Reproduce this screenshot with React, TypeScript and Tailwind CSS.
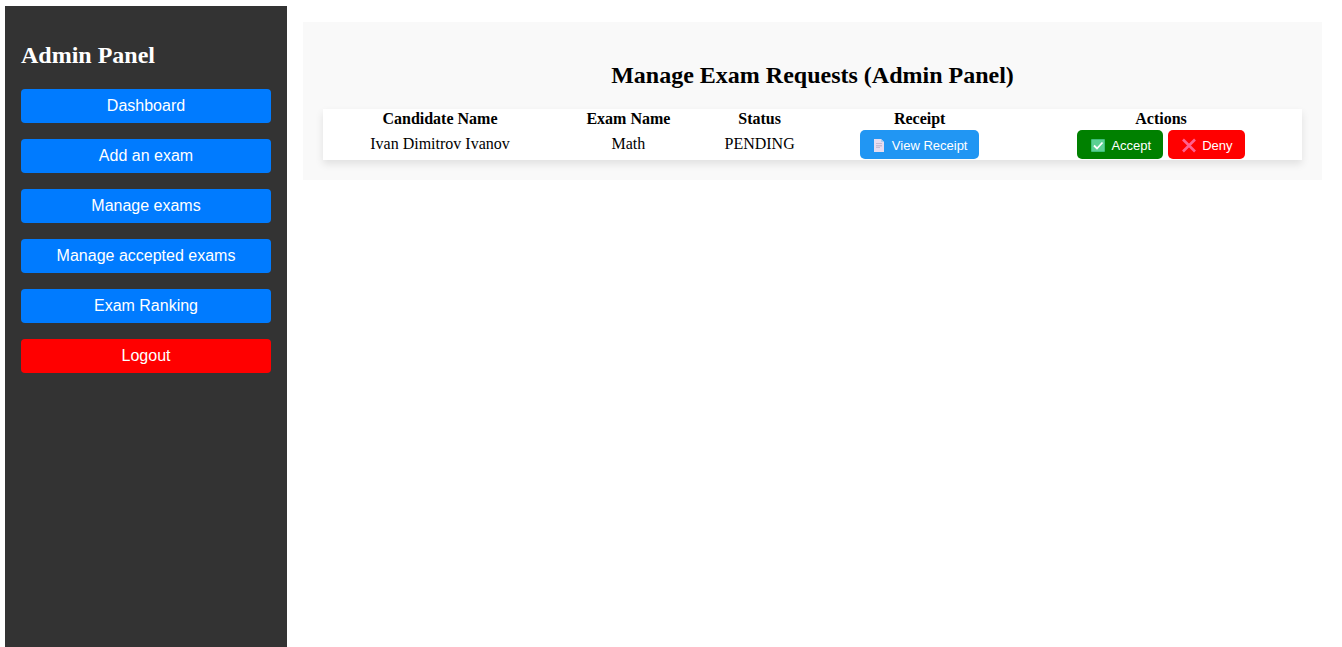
import type { ReactNode } from "react";

const navItems = [
  "Dashboard",
  "Add an exam",
  "Manage exams",
  "Manage accepted exams",
  "Exam Ranking",
];

const columns = [
  { label: "Candidate Name", width: "w-[23.9%]" },
  { label: "Exam Name", width: "w-[14.6%]" },
  { label: "Status", width: "w-[12.2%]" },
  { label: "Receipt", width: "w-[20.5%]" },
  { label: "Actions", width: "w-[28.8%]" },
];

const requests = [
  { id: 1, candidate: "Ivan Dimitrov Ivanov", exam: "Math", status: "PENDING" },
];

function PageIcon() {
  return (
    <svg width="16" height="15" viewBox="0 0 16 15" aria-hidden="true">
      <path d="M2 1h7l3 3v10H2z" fill="#e6dcf0" />
      <path d="M9 1v3h3z" fill="#b4cdee" />
      <path d="M4 5.5h6M4 7.5h6M4 9.5h4" stroke="#c6bbd3" strokeWidth="1" />
      <path d="M4 8.5h6" stroke="#d8cee3" strokeWidth="1" />
    </svg>
  );
}

function CheckIcon() {
  return (
    <svg width="18" height="15" viewBox="0 0 18 15" aria-hidden="true">
      <rect x="2" y="1" width="14" height="13" rx="1" fill="#3fbf7a" />
      <rect x="3" y="2" width="12" height="11" fill="#5bd093" />
      <path d="M5 7.5l3 3 5.5-6" fill="none" stroke="#fff" strokeWidth="1.8" />
    </svg>
  );
}

function CrossIcon() {
  return (
    <svg width="18" height="15" viewBox="0 0 18 15" aria-hidden="true">
      <path d="M3 1.5l12 12M15 1.5l-12 12" stroke="#ff6090" strokeWidth="2.6" />
    </svg>
  );
}

function ActionButton({
  color,
  icon,
  children,
}: {
  color: string;
  icon: ReactNode;
  children: ReactNode;
}) {
  return (
    <button
      type="button"
      className={`inline-flex h-[29px] items-center gap-1 rounded-[5px] px-3 pt-0.5 align-top font-['Liberation_Sans',Arial,sans-serif] text-[13px] leading-4 whitespace-nowrap text-white ${color}`}
    >
      {icon}
      {children}
    </button>
  );
}

export default function App() {
  return (
    <div className="flex min-h-screen bg-white pt-1.5 pr-5 pl-[5px] font-['Liberation_Serif','Times_New_Roman',serif] text-black">
      <aside className="w-[282px] shrink-0 bg-[#333] px-4 pt-9 font-['Liberation_Sans',Arial,sans-serif]">
        <h2 className="mb-5 font-['Liberation_Serif','Times_New_Roman',serif] text-2xl leading-[27px] font-bold text-white">
          Admin Panel
        </h2>
        <nav className="flex flex-col gap-4">
          {navItems.map((item) => (
            <button
              key={item}
              type="button"
              className="h-[34px] rounded bg-[#007bff] pb-px text-base leading-4 text-white"
            >
              {item}
            </button>
          ))}
          <button
            type="button"
            className="h-[34px] rounded bg-[#f00] pb-px text-base leading-4 text-white"
          >
            Logout
          </button>
        </nav>
      </aside>
      <main className="mt-4 ml-4 flex-1 self-start bg-[#f9f9f9] px-5 pt-10 pb-5">
        <h2 className="mb-5 text-center text-2xl leading-[27px] font-bold">
          Manage Exam Requests (Admin Panel)
        </h2>
        <table className="w-full bg-white text-center text-base leading-[19px] shadow-[0_4px_8px_rgba(0,0,0,0.1)]">
          <thead>
            <tr>
              {columns.map((column) => (
                <th key={column.label} className={`pb-px font-bold ${column.width}`}>
                  {column.label}
                </th>
              ))}
            </tr>
          </thead>
          <tbody>
            {requests.map((request) => (
              <tr key={request.id}>
                <td className="px-px pb-0.5">{request.candidate}</td>
                <td className="px-px pb-0.5">{request.exam}</td>
                <td className="px-px pb-0.5">{request.status}</td>
                <td className="p-px">
                  <ActionButton color="bg-[#2196f3]" icon={<PageIcon />}>
                    View Receipt
                  </ActionButton>
                </td>
                <td className="p-px">
                  <div className="flex justify-center gap-[5px]">
                    <ActionButton color="bg-[#008000]" icon={<CheckIcon />}>
                      Accept
                    </ActionButton>
                    <ActionButton color="bg-[#f00]" icon={<CrossIcon />}>
                      Deny
                    </ActionButton>
                  </div>
                </td>
              </tr>
            ))}
          </tbody>
        </table>
      </main>
    </div>
  );
}
